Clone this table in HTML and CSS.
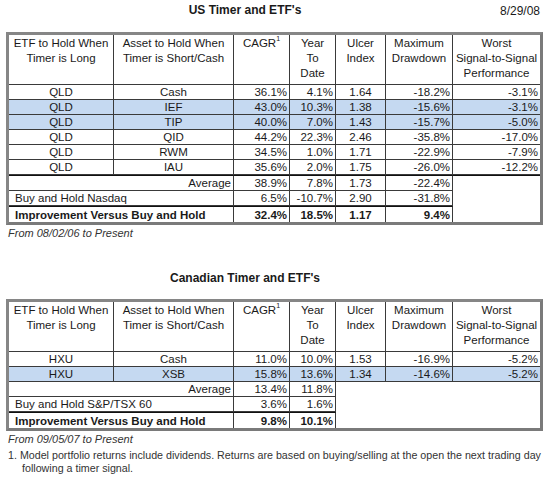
FILE: index.html
```html
<!DOCTYPE html>
<html lang="en">
<head>
	<meta charset="UTF-8">
	<title>US and Canadian Timer and ETF's</title>
	<link rel="stylesheet" href="styles.css">
</head>
<body>
<div class="page">
	<div class="head">
		<h2 class="title">US Timer and ETF's</h2>
		<span class="date">8/29/08</span>
	</div>
	<div class="frame">
		<table class="grid">
			<tr class="hdr">
				<th class="c1">ETF to Hold When<br>Timer is Long</th>
				<th class="c2">Asset to Hold When<br>Timer is Short/Cash</th>
				<th class="c3">CAGR<sup>1</sup></th>
				<th class="c4">Year<br>To<br>Date</th>
				<th class="c5">Ulcer<br>Index</th>
				<th class="c6">Maximum<br>Drawdown</th>
				<th class="c7">Worst<br>Signal-to-Signal<br>Performance</th>
			</tr>
			<tr><td class="ctr">QLD</td><td class="ctr">Cash</td><td>36.1%</td><td>4.1%</td><td class="ctr">1.64</td><td>-18.2%</td><td class="last">-3.1%</td></tr>
			<tr class="hi"><td class="ctr">QLD</td><td class="ctr">IEF</td><td>43.0%</td><td>10.3%</td><td class="ctr">1.38</td><td>-15.6%</td><td class="last">-3.1%</td></tr>
			<tr class="hi"><td class="ctr">QLD</td><td class="ctr">TIP</td><td>40.0%</td><td>7.0%</td><td class="ctr">1.43</td><td>-15.7%</td><td class="last">-5.0%</td></tr>
			<tr><td class="ctr">QLD</td><td class="ctr">QID</td><td>44.2%</td><td>22.3%</td><td class="ctr">2.46</td><td>-35.8%</td><td class="last">-17.0%</td></tr>
			<tr><td class="ctr">QLD</td><td class="ctr">RWM</td><td>34.5%</td><td>1.0%</td><td class="ctr">1.71</td><td>-22.9%</td><td class="last">-7.9%</td></tr>
			<tr><td class="ctr">QLD</td><td class="ctr">IAU</td><td>35.6%</td><td>2.0%</td><td class="ctr">1.75</td><td>-26.0%</td><td class="last">-12.2%</td></tr>
			<tr class="avg">
				<td colspan="2">Average</td><td>38.9%</td><td>7.8%</td><td class="ctr">1.73</td><td>-22.4%</td>
				<td class="blank" rowspan="3"></td>
			</tr>
			<tr><td colspan="2" class="lbl">Buy and Hold Nasdaq</td><td>6.5%</td><td>-10.7%</td><td class="ctr">2.90</td><td>-31.8%</td></tr>
			<tr class="imp"><td colspan="2" class="lbl">Improvement Versus Buy and Hold</td><td>32.4%</td><td>18.5%</td><td class="ctr">1.17</td><td>9.4%</td></tr>
		</table>
	</div>
	<p class="note">From 08/02/06 to Present</p>

	<div class="head head2">
		<h2 class="title">Canadian Timer and ETF's</h2>
	</div>
	<div class="frame">
		<table class="grid">
			<tr class="hdr">
				<th class="c1">ETF to Hold When<br>Timer is Long</th>
				<th class="c2">Asset to Hold When<br>Timer is Short/Cash</th>
				<th class="c3">CAGR<sup>1</sup></th>
				<th class="c4">Year<br>To<br>Date</th>
				<th class="c5">Ulcer<br>Index</th>
				<th class="c6">Maximum<br>Drawdown</th>
				<th class="c7">Worst<br>Signal-to-Signal<br>Performance</th>
			</tr>
			<tr><td class="ctr">HXU</td><td class="ctr">Cash</td><td>11.0%</td><td>10.0%</td><td class="ctr">1.53</td><td>-16.9%</td><td class="last">-5.2%</td></tr>
			<tr class="hi"><td class="ctr">HXU</td><td class="ctr">XSB</td><td>15.8%</td><td>13.6%</td><td class="ctr">1.34</td><td>-14.6%</td><td class="last">-5.2%</td></tr>
			<tr class="avg thin">
				<td colspan="2">Average</td><td>13.4%</td><td>11.8%</td>
				<td class="blank" colspan="3" rowspan="3"></td>
			</tr>
			<tr><td colspan="2" class="lbl">Buy and Hold S&amp;P/TSX 60</td><td>3.6%</td><td>1.6%</td></tr>
			<tr class="imp"><td colspan="2" class="lbl">Improvement Versus Buy and Hold</td><td>9.8%</td><td>10.1%</td></tr>
		</table>
	</div>
	<p class="note">From 09/05/07 to Present</p>
	<p class="foot">1. Model portfolio returns include dividends. Returns are based on buying/selling at the open the next trading day following a timer signal.</p>
</div>
</body>
</html>
```

FILE: styles.css
```css
body,div,h2,p,table {margin:0;padding:0;}
body {
	background:#fff;
	color:#1a1a1a;
	font:11.5px/14px "Liberation Sans", Arial, sans-serif;
}
.page {
	width:537px;
	padding:3px 0 0 6px;
}
.head {
	display:flex;
	align-items:center;
	height:15px;
}
.head .title {
	width:478px;
	font-size:12px;
	line-height:15px;
	text-align:center;
}
.head .date {
	flex:1;
	font-size:12px;
	text-align:right;
	padding-right:3px;
}
.head2 {
	margin-top:31px;
}
.frame {
	margin-top:14px;
	border:3px solid #868686;
	border-right-color:#7a7a7a;
	border-bottom-color:#7a7a7a;
}
.head2 + .frame {
	margin-top:13px;
}
.grid {
	width:531px;
	table-layout:fixed;
	border-collapse:separate;
	border-spacing:0;
}
.grid th,
.grid td {
	box-sizing:border-box;
	padding:0 2px;
	border-right:1px solid #3a3a3a;
	border-bottom:1px solid #3a3a3a;
	white-space:nowrap;
	overflow:hidden;
}
.grid th {
	height:50px;
	padding-top:1px;
	font-weight:normal;
	line-height:15px;
	text-align:center;
	vertical-align:top;
}
.grid th sup {
	font-size:7px;
	line-height:0;
	vertical-align:6px;
}
.grid td {
	height:15px;
	text-align:right;
}
.grid .c1 {width:105px;}
.grid .c2 {width:120px;}
.grid .c3 {width:56px;}
.grid .c4 {width:46px;}
.grid .c5 {width:50px;}
.grid .c6 {width:67px;}
.grid .c7 {width:87px;}
.grid .c7,
.grid .last,
.grid .blank {
	border-right:0;
}
.grid .ctr {
	text-align:center;
}
.grid .lbl {
	text-align:left;
	padding-left:6px;
}
.grid .hi td {
	background:#c5d9f1;
}
.grid .avg td {
	border-top:1px solid #111;
}
.grid .thin td {
	border-top:0;
}
.grid .imp td {
	border-top:1px solid #111;
	border-bottom:0;
	font-weight:bold;
	height:16px;
}
.grid .blank {
	border-bottom:0;
}
.note {
	margin-top:1px;
	padding-left:2px;
	color:#333;
	font-size:11px;
	font-style:italic;
	line-height:14px;
}
.foot {
	margin-top:3px;
	padding:0 0 0 16px;
	text-indent:-14px;
	color:#333;
	font-size:10.7px;
	line-height:13px;
}
```
